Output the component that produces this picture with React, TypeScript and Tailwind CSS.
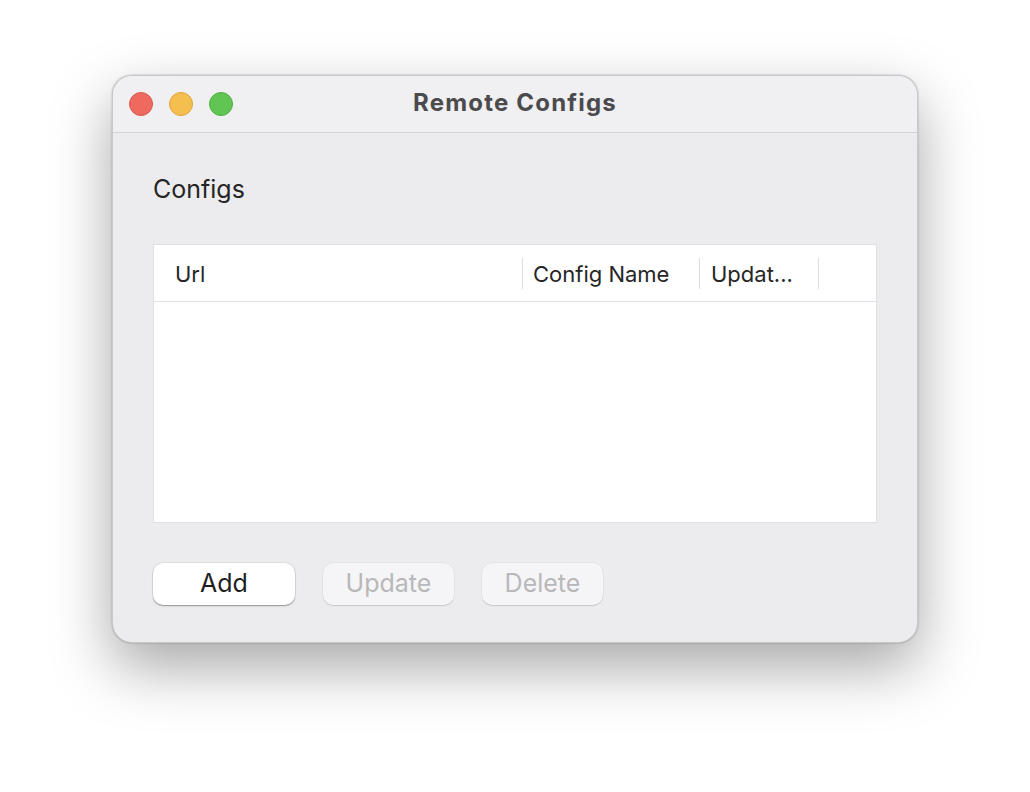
import React from "react";

export default function App() {
  return (
    <div className="w-[1030px] h-[792px] bg-white flex items-start" style={{ fontFamily: '"Inter", "Liberation Sans", sans-serif' }}>
      <div className="ml-[112px] mt-[75px] w-[806px] h-[568px] rounded-[20px] bg-[#ececee] border border-[#c8c8ca] shadow-[0_24px_60px_rgba(0,0,0,0.35),0_0_2px_rgba(0,0,0,0.3)] flex flex-col overflow-hidden">
        <div className="h-[57px] bg-[#f0f0f2] border-b border-[#d4d4d6] flex items-center relative shrink-0">
          <div className="flex gap-[16px] pl-[16px]">
            <div className="w-[24px] h-[24px] rounded-full bg-[#ee6a5f] border border-[#d9584e]" />
            <div className="w-[24px] h-[24px] rounded-full bg-[#f5bf4f] border border-[#dca53c]" />
            <div className="w-[24px] h-[24px] rounded-full bg-[#61c554] border border-[#4fae44]" />
          </div>
          <div className="absolute inset-0 flex items-center justify-center pointer-events-none">
            <span className="text-[24px] font-bold text-[#4b4b4d] tracking-[1.2px] -mt-[2px]">Remote Configs</span>
          </div>
        </div>
        <div className="flex flex-col px-[40px] pt-[41px]">
          <div className="text-[25px] text-[#262626] leading-[30px]">Configs</div>
          <div className="mt-[40px] h-[279px] bg-white border border-[#e0e0e2] flex flex-col">
            <div className="h-[57px] border-b border-[#e2e2e4] flex items-center text-[22px] text-[#262626] shrink-0">
              <div className="w-[368px] pl-[21px] flex items-center pt-[3px]">Url</div>
              <div className="w-[1px] h-[31px] bg-[#dcdcde]" />
              <div className="w-[176px] pl-[10px] pt-[3px]">Config Name</div>
              <div className="w-[1px] h-[31px] bg-[#dcdcde]" />
              <div className="w-[118px] pl-[11px] pt-[3px] whitespace-nowrap">Updat...</div>
              <div className="w-[1px] h-[31px] bg-[#dcdcde]" />
            </div>
            <div className="flex-1" />
          </div>
          <div className="mt-[40px] flex gap-[28px] text-[25px]">
            <div className="w-[142px] h-[42px] rounded-[10px] bg-white shadow-[0_1px_1.5px_rgba(0,0,0,0.35),0_0_0_0.5px_rgba(0,0,0,0.1)] flex items-center justify-center text-[#1f1f1f]">Add</div>
            <div className="w-[131px] h-[42px] rounded-[10px] bg-[#f5f5f7] shadow-[0_1px_1px_rgba(0,0,0,0.12),0_0_0_0.5px_rgba(0,0,0,0.06)] flex items-center justify-center text-[#b8b8ba]">Update</div>
            <div className="w-[121px] h-[42px] rounded-[10px] bg-[#f5f5f7] shadow-[0_1px_1px_rgba(0,0,0,0.12),0_0_0_0.5px_rgba(0,0,0,0.06)] flex items-center justify-center text-[#b8b8ba]">Delete</div>
          </div>
        </div>
      </div>
    </div>
  );
}
